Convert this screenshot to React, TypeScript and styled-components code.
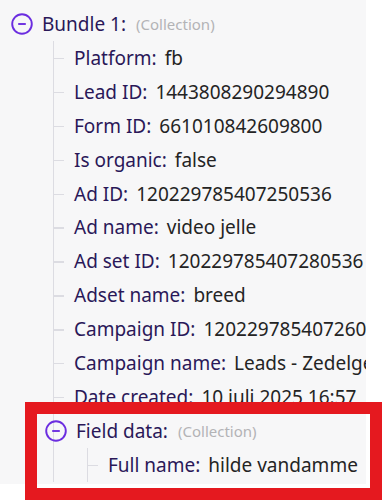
import React from "react";
import styled, { createGlobalStyle } from "styled-components";

const Global = createGlobalStyle`
  html, body { margin: 0; padding: 0; background: #ffffff; }
  body { font-family: "Noto Sans", "Open Sans", sans-serif; }
`;

const Page = styled.div`
  position: relative;
  width: 382px;
  height: 500px;
  overflow: hidden;
  background: #ffffff;
`;

const Panel = styled.div`
  width: 366px;
  background: #f7f7f8;
  padding: 7px 0 2px 0;
  box-sizing: border-box;
  overflow: hidden;
`;

const Node = styled.div<{ $nested?: boolean }>`
  display: flex;
  flex-direction: column;
  margin-left: ${(p) => (p.$nested ? "-9px" : "11px")};
`;

const Header = styled.div`
  display: flex;
  align-items: center;
  height: 34px;
  gap: 9px;
  white-space: nowrap;
`;

const Toggle = styled.svg`
  width: 22px;
  height: 22px;
  flex: none;
`;

const Label = styled.span`
  color: #2a1858;
  font-size: 19px;
`;

const Kind = styled.span`
  color: #b3b3b6;
  font-size: 15px;
  margin-left: 1px;
`;

const Children = styled.div`
  margin-left: 42px;
  border-left: 1.5px solid #dcdce2;
  display: flex;
  flex-direction: column;
`;

const Leaf = styled.div`
  position: relative;
  display: flex;
  align-items: center;
  gap: 8px;
  height: 33.9px;
  padding-left: 20px;
  white-space: nowrap;
  &::before {
    content: "";
    position: absolute;
    left: 0;
    top: 50%;
    width: 10px;
    height: 1.5px;
    background: #dcdce2;
  }
`;

const Value = styled.span`
  color: #242424;
  font-size: 19px;
`;

const Highlight = styled.div`
  position: absolute;
  left: 25px;
  top: 402px;
  width: 357px;
  height: 98px;
  box-sizing: border-box;
  border: 12px solid #e5191f;
  pointer-events: none;
`;

const MinusCircle = () => (
  <Toggle viewBox="0 0 22 22">
    <circle cx="11" cy="11" r="9.8" fill="none" stroke="#6b2de0" strokeWidth="1.9" />
    <line x1="7.2" y1="11" x2="14.8" y2="11" stroke="#6b2de0" strokeWidth="1.9" />
  </Toggle>
);

const rows: [string, string][] = [
  ["Platform", "fb"],
  ["Lead ID", "1443808290294890"],
  ["Form ID", "661010842609800"],
  ["Is organic", "false"],
  ["Ad ID", "120229785407250536"],
  ["Ad name", "video jelle"],
  ["Ad set ID", "120229785407280536"],
  ["Adset name", "breed"],
  ["Campaign ID", "120229785407260536"],
  ["Campaign name", "Leads - Zedelgem"],
  ["Date created", "10 juli 2025 16:57"],
];

export default function App() {
  return (
    <>
      <Global />
      <Page>
        <Panel>
          <Node>
            <Header>
              <MinusCircle />
              <Label>Bundle 1:</Label>
              <Kind>(Collection)</Kind>
            </Header>
            <Children>
              {rows.map(([k, v]) => (
                <Leaf key={k}>
                  <Label>{k}:</Label>
                  <Value>{v}</Value>
                </Leaf>
              ))}
              <Node $nested>
                <Header>
                  <MinusCircle />
                  <Label>Field data:</Label>
                  <Kind>(Collection)</Kind>
                </Header>
                <Children>
                  <Leaf>
                    <Label>Full name:</Label>
                    <Value>hilde vandamme</Value>
                  </Leaf>
                </Children>
              </Node>
            </Children>
          </Node>
        </Panel>
        <Highlight />
      </Page>
    </>
  );
}
